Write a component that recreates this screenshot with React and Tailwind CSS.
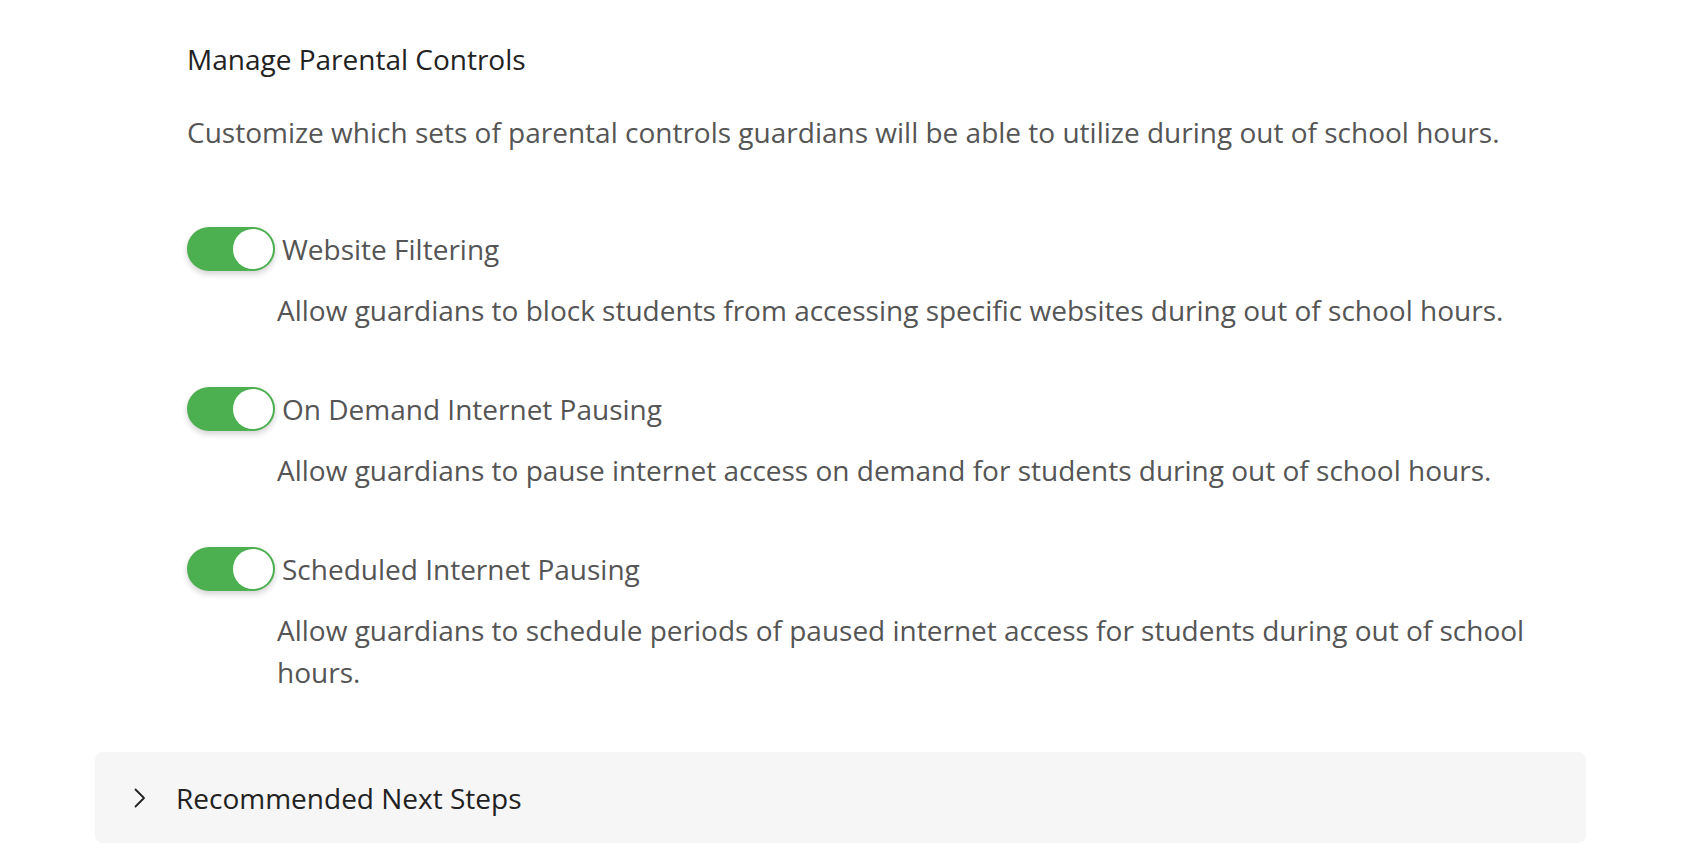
const controls = [
  {
    title: "Website Filtering",
    description:
      "Allow guardians to block students from accessing specific websites during out of school hours.",
  },
  {
    title: "On Demand Internet Pausing",
    description:
      "Allow guardians to pause internet access on demand for students during out of school hours.",
  },
  {
    title: "Scheduled Internet Pausing",
    description:
      "Allow guardians to schedule periods of paused internet access for students during out of school hours.",
  },
];

function Toggle() {
  return (
    <div className="flex h-[44px] w-[88px] shrink-0 items-center justify-end rounded-full bg-[#4caf50] p-[2px] shadow-[0_3px_6px_rgba(0,0,0,0.18)]">
      <div className="h-[40px] w-[40px] rounded-full bg-white" />
    </div>
  );
}

export default function App() {
  return (
    <main
      className="min-h-screen bg-white"
      style={{ fontFamily: '"Open Sans", "Noto Sans", sans-serif' }}
    >
      <div className="ml-[95px] w-[1491px] pt-[38px]">
        <section className="pl-[92px]">
          <h2 className="text-[28px] leading-[42px] text-[#222]">
            Manage Parental Controls
          </h2>

          <p className="mt-[31px] text-[28px] leading-[42px] text-[#555]">
            Customize which sets of parental controls guardians will be able to
            utilize during out of school hours.
          </p>

          <div className="mt-[74px] flex flex-col gap-[56px]">
            {controls.map((control) => (
              <div key={control.title}>
                <div className="flex items-center gap-[7px]">
                  <Toggle />
                  <span className="text-[28px] leading-[42px] text-[#555]">
                    {control.title}
                  </span>
                </div>
                <p className="mt-[18px] pl-[90px] text-[28px] leading-[42px] text-[#555]">
                  {control.description}
                </p>
              </div>
            ))}
          </div>
        </section>

        <button
          type="button"
          className="mt-[59px] flex h-[91px] w-full items-center rounded-[8px] bg-[#f6f6f6] pl-[39px] text-left"
        >
          <svg width="12" height="20" viewBox="0 0 12 20" fill="none">
            <path
              d="M1.5 1.5 L10 10 L1.5 18.5"
              stroke="#222"
              strokeWidth="1.8"
              strokeLinecap="round"
              strokeLinejoin="round"
            />
          </svg>
          <span className="ml-[30px] text-[28px] leading-[42px] text-[#222]">
            Recommended Next Steps
          </span>
        </button>
      </div>
    </main>
  );
}
